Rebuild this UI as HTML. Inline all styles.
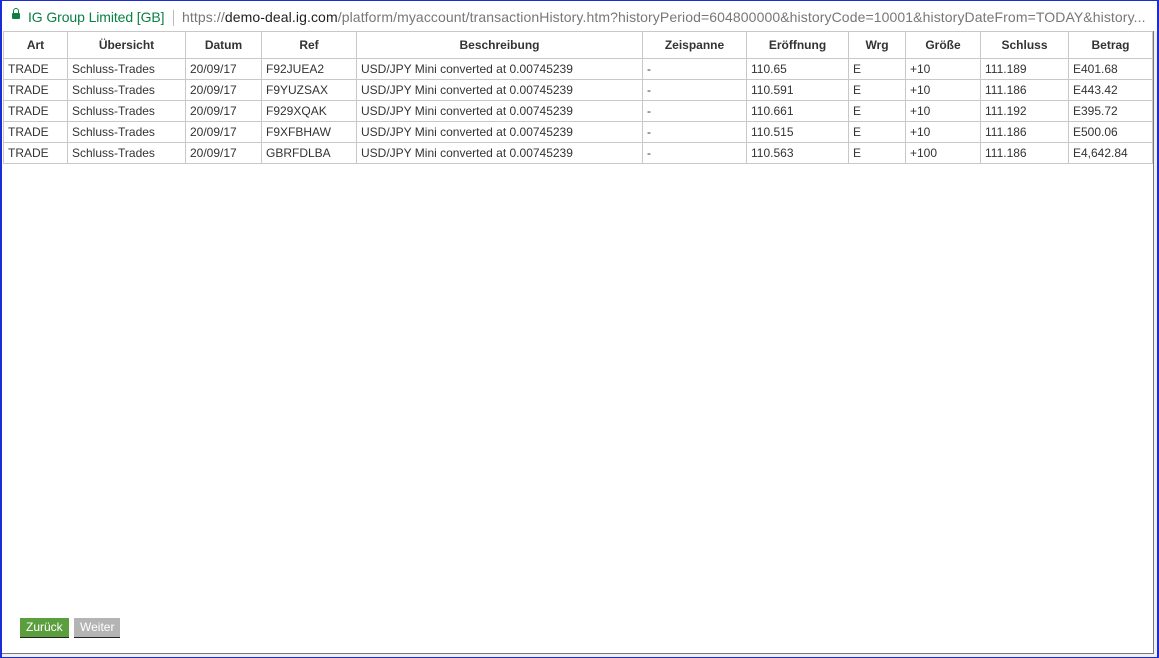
<!DOCTYPE html>
<html><head><meta charset="utf-8"><style>
html,body{margin:0;padding:0;}
body{width:1159px;height:658px;position:relative;overflow:hidden;background:#fff;font-family:"Liberation Sans",Arial,sans-serif;}
.frame{position:absolute;left:0;top:0;width:1159px;height:658px;box-sizing:border-box;border:1px solid #1a2cd8;border-left:2px solid #1a2cd8;border-right:2px solid #1a2cd8;}
.bar{position:absolute;left:2px;top:1px;width:1154px;height:30px;background:#fff;font-size:14px;line-height:32px;white-space:nowrap;overflow:hidden;}
.lock{position:absolute;left:10px;top:12px;width:8px;height:6px;background:#0b8043;border-radius:1px;}
.lock:before{content:"";position:absolute;left:1px;top:-5px;width:4px;height:5px;border:1px solid #0b8043;border-bottom:none;border-radius:3px 3px 0 0;}
.org{position:absolute;left:26px;color:#0b8043;letter-spacing:-0.1px;}
.sep{position:absolute;left:171px;top:9px;width:1px;height:16px;background:#bbb;}
.url{position:absolute;left:180px;color:#777;letter-spacing:0.1px;}
.url b{font-weight:normal;color:#222;}
table{position:absolute;left:3px;top:31px;border-collapse:collapse;font-size:12px;color:#333;}
td,th{border:1px solid #c8c8c8;padding:0 4px;height:20px;text-align:left;white-space:nowrap;}
th{height:26px;text-align:center;font-weight:bold;}
.rb{position:absolute;right:5px;top:31px;width:1px;height:622px;background:#777;}
.bb{position:absolute;left:2px;bottom:4px;width:1152px;height:1px;background:#777;}
.rs{position:absolute;right:1px;top:31px;width:4px;height:626px;background:#eef0f4;}
.bs{position:absolute;left:2px;bottom:1px;width:1155px;height:3px;background:#eef0f4;}
.btn{position:absolute;top:618px;height:20px;line-height:19px;font-size:12px;color:#fff;padding:0 6px;box-sizing:border-box;border-bottom:1px solid #222;}
</style></head><body>
<div class="bar"><div class="lock"></div><span class="org">IG Group Limited [GB]</span><div class="sep"></div><span class="url">https://<b>demo-deal.ig.com</b>/platform/myaccount/transactionHistory.htm?historyPeriod=604800000&amp;historyCode=10001&amp;historyDateFrom=TODAY&amp;history...</span></div>
<table>
<colgroup><col style="width:64px"><col style="width:118px"><col style="width:76px"><col style="width:95px"><col style="width:286px"><col style="width:104px"><col style="width:102px"><col style="width:57px"><col style="width:75px"><col style="width:88px"><col style="width:84px"></colgroup>
<tr><th>Art</th><th>Übersicht</th><th>Datum</th><th>Ref</th><th>Beschreibung</th><th>Zeispanne</th><th>Eröffnung</th><th>Wrg</th><th>Größe</th><th>Schluss</th><th>Betrag</th></tr>
<tr><td>TRADE</td><td>Schluss-Trades</td><td>20/09/17</td><td>F92JUEA2</td><td>USD/JPY Mini converted at 0.00745239</td><td>-</td><td>110.65</td><td>E</td><td>+10</td><td>111.189</td><td>E401.68</td></tr>
<tr><td>TRADE</td><td>Schluss-Trades</td><td>20/09/17</td><td>F9YUZSAX</td><td>USD/JPY Mini converted at 0.00745239</td><td>-</td><td>110.591</td><td>E</td><td>+10</td><td>111.186</td><td>E443.42</td></tr>
<tr><td>TRADE</td><td>Schluss-Trades</td><td>20/09/17</td><td>F929XQAK</td><td>USD/JPY Mini converted at 0.00745239</td><td>-</td><td>110.661</td><td>E</td><td>+10</td><td>111.192</td><td>E395.72</td></tr>
<tr><td>TRADE</td><td>Schluss-Trades</td><td>20/09/17</td><td>F9XFBHAW</td><td>USD/JPY Mini converted at 0.00745239</td><td>-</td><td>110.515</td><td>E</td><td>+10</td><td>111.186</td><td>E500.06</td></tr>
<tr><td>TRADE</td><td>Schluss-Trades</td><td>20/09/17</td><td>GBRFDLBA</td><td>USD/JPY Mini converted at 0.00745239</td><td>-</td><td>110.563</td><td>E</td><td>+100</td><td>111.186</td><td>E4,642.84</td></tr>
</table>
<div class="btn" style="left:20px;width:49px;background:#5a9e3e;">Zurück</div>
<div class="btn" style="left:74px;width:46px;background:#b4b4b4;">Weiter</div>
<div class="rs"></div><div class="bs"></div>
<div class="rb"></div><div class="bb"></div>
<div class="frame"></div>
</body></html>
